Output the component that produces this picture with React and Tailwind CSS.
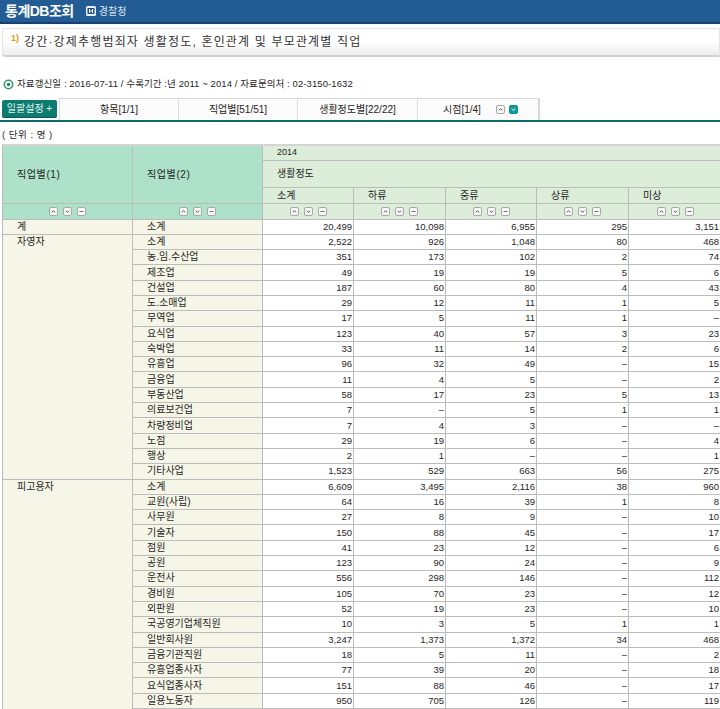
import React from 'react'

const FONT = 'font-["Liberation_Sans","Noto_Sans_CJK_KR",sans-serif]'

const rows = [
  ['계', '소계', '20,499', '10,098', '6,955', '295', '3,151'],
  ['자영자', '소계', '2,522', '926', '1,048', '80', '468'],
  ['', '농.임.수산업', '351', '173', '102', '2', '74'],
  ['', '제조업', '49', '19', '19', '5', '6'],
  ['', '건설업', '187', '60', '80', '4', '43'],
  ['', '도.소매업', '29', '12', '11', '1', '5'],
  ['', '무역업', '17', '5', '11', '1', '–'],
  ['', '요식업', '123', '40', '57', '3', '23'],
  ['', '숙박업', '33', '11', '14', '2', '6'],
  ['', '유흥업', '96', '32', '49', '–', '15'],
  ['', '금융업', '11', '4', '5', '–', '2'],
  ['', '부동산업', '58', '17', '23', '5', '13'],
  ['', '의료보건업', '7', '–', '5', '1', '1'],
  ['', '차량정비업', '7', '4', '3', '–', '–'],
  ['', '노점', '29', '19', '6', '–', '4'],
  ['', '행상', '2', '1', '–', '–', '1'],
  ['', '기타사업', '1,523', '529', '663', '56', '275'],
  ['피고용자', '소계', '6,609', '3,495', '2,116', '38', '960'],
  ['', '교원(사립)', '64', '16', '39', '1', '8'],
  ['', '사무원', '27', '8', '9', '–', '10'],
  ['', '기술자', '150', '88', '45', '–', '17'],
  ['', '점원', '41', '23', '12', '–', '6'],
  ['', '공원', '123', '90', '24', '–', '9'],
  ['', '운전사', '556', '298', '146', '–', '112'],
  ['', '경비원', '105', '70', '23', '–', '12'],
  ['', '외판원', '52', '19', '23', '–', '10'],
  ['', '국공영기업체직원', '10', '3', '5', '1', '1'],
  ['', '일반회사원', '3,247', '1,373', '1,372', '34', '468'],
  ['', '금융기관직원', '18', '5', '11', '–', '2'],
  ['', '유흥업종사자', '77', '39', '20', '–', '18'],
  ['', '요식업종사자', '151', '88', '46', '–', '17'],
  ['', '일용노동자', '950', '705', '126', '–', '119'],
  ['', '', '', '', '', '', ''],
]

const spans = { 0: 1, 1: 16, 17: 16 }

function SortBtn({ type, active }) {
  return (
    <svg width="9" height="9" viewBox="0 0 9 9" className="inline-block">
      <rect x="0.5" y="0.5" width="8" height="8" rx="1.5" fill={active ? '#0f9c9c' : '#f8f8f8'} stroke={active ? '#0f8c8c' : '#a8a8a8'} />
      {type === 'up' && <path d="M2.8 5.4 L4.5 3.6 L6.2 5.4" fill="none" stroke={active ? '#fff' : '#555'} strokeWidth="1" />}
      {type === 'down' && <path d="M2.8 3.6 L4.5 5.4 L6.2 3.6" fill="none" stroke={active ? '#fff' : '#555'} strokeWidth="1" />}
      {type === 'minus' && <path d="M2.5 4.5 H6.5" fill="none" stroke="#777" strokeWidth="1" />}
    </svg>
  )
}

function BtnGroup() {
  return (
    <div className="flex justify-center items-center gap-[5px] h-full">
      <SortBtn type="up" />
      <SortBtn type="down" />
      <SortBtn type="minus" />
    </div>
  )
}

const th = 'border border-[#bcbcbc] text-left font-normal p-0'

export default function App() {
  return (
    <div className={`${FONT} w-[720px] h-[709px] overflow-hidden bg-white text-[#262626] text-[10px]`}>
      <div className="h-[24px] bg-[#235b94] border-b-2 border-[#16406f] flex items-center pl-[5px]">
        <span className="text-white text-[14px] font-bold tracking-[-0.5px] leading-none">통계DB조회</span>
        <svg width="10" height="10" viewBox="0 0 10 10" className="ml-[12px]">
          <rect width="10" height="10" rx="1.5" fill="#e8eef6" />
          <rect x="1.5" y="2" width="7" height="6" fill="#1d4f8c" />
          <path d="M3.5 3 V7 M6.5 3 V7 M3.5 5 H6.5" stroke="#fff" strokeWidth="1" fill="none" />
        </svg>
        <span className="ml-[3px] text-[#dbe6f2] text-[10px]">경찰청</span>
      </div>

      <div className="mt-[4px] ml-[2px] h-[29px] border border-[#e4e4e4] border-b-2 border-b-[#d0d0d0] rounded-l-[3px] bg-gradient-to-b from-white via-white to-[#ececec] flex items-center pl-[8px]">
        <span className="text-[#e89a10] text-[9px] font-bold -mt-[6px]">1)</span>
        <span className="ml-[5px] text-[12px] tracking-[1.17px] text-[#333]">강간·강제추행범죄자 생활정도, 혼인관계 및 부모관계별 직업</span>
      </div>

      <div className="mt-[20px] ml-[3px] h-[14px] flex items-center">
        <svg width="11" height="11" viewBox="0 0 11 11">
          <circle cx="5.5" cy="5.5" r="4.2" fill="none" stroke="#2f9a6a" strokeWidth="1.6" />
          <circle cx="5.5" cy="5.5" r="1.7" fill="#2f7a5a" />
        </svg>
        <span className="ml-[3px] text-[9.5px] tracking-[0.09px] whitespace-nowrap">자료갱신일 : 2016-07-11 / 수록기간 :년 2011 ~ 2014 / 자료문의처 : 02-3150-1632</span>
      </div>

      <div className="mt-[7px] h-[24px] border-b-2 border-[#0b6f68] flex items-end pl-[2px]">
        <button className="w-[55px] h-[18px] mb-[2px] rounded-[2px] bg-[#0d7c70] border-b border-[#085a52] text-[#e6f3f0] text-[10px] flex items-center justify-center">일괄설정 +</button>
        <div className="ml-[2px] flex h-[22px] border-t border-r-2 border-[#d8d8d8] bg-[#fbfbfb]">
          <div className="w-[120px] border-x border-[#dcdcdc] flex items-center justify-center">항목[1/1]</div>
          <div className="w-[119px] border-r border-[#dcdcdc] flex items-center justify-center">직업별[51/51]</div>
          <div className="w-[120px] border-r border-[#dcdcdc] flex items-center justify-center">생활정도별[22/22]</div>
          <div className="w-[120px] flex items-center pl-[25px]">
            시점[1/4]
            <span className="ml-[15px] flex gap-[4px]"><SortBtn type="up" /><SortBtn type="down" active /></span>
          </div>
        </div>
      </div>

      <div className="mt-[7px] ml-[2px] h-[12px] leading-[12px] text-[9.5px] tracking-[0.5px]">( 단위 : 명 )</div>

      <table className="mt-[3px] ml-[2px] w-[720px] table-fixed border-collapse border-t-2 border-[#d4d4d4]">
        <colgroup>
          <col className="w-[130px]" />
          <col className="w-[130px]" />
          <col className="w-[91px]" />
          <col className="w-[92px]" />
          <col className="w-[91px]" />
          <col className="w-[92px]" />
          <col className="w-[94px]" />
        </colgroup>
        <thead>
          <tr className="h-[15px]">
            <th rowSpan={3} className={`${th} bg-[#aee1ca] pl-[14px] font-bold tracking-[0.6px] text-[#222]`}>직업별(1)</th>
            <th rowSpan={3} className={`${th} bg-[#aee1ca] pl-[14px] font-bold tracking-[0.6px] text-[#222]`}>직업별(2)</th>
            <th colSpan={5} className={`${th} bg-[#dcedd9] pl-[14px] text-[9px]`}>2014</th>
          </tr>
          <tr className="h-[27px]">
            <th colSpan={5} className={`${th} bg-[#dcedd9] pl-[14px]`}>생활정도</th>
          </tr>
          <tr className="h-[15px]">
            {['소계', '하류', '중류', '상류', '미상'].map(h => (
              <th key={h} className={`${th} bg-[#dcedd9] pl-[14px]`}>{h}</th>
            ))}
          </tr>
          <tr className="h-[16px]">
            {[0, 1].map(i => (
              <th key={i} className={`${th} bg-[#aee1ca]`}><BtnGroup /></th>
            ))}
            {[0, 1, 2, 3, 4].map(i => (
              <th key={i} className={`${th} bg-[#dcedd9]`}><BtnGroup /></th>
            ))}
          </tr>
        </thead>
        <tbody>
          {rows.map((r, i) => (
            <tr key={i} className="h-[15.3px]">
              {spans[i] && (
                <td rowSpan={spans[i]} className="border border-[#bcbcbc] bg-[#f6f6e8] pl-[14px] align-top p-0 leading-[14px]">{r[0]}</td>
              )}
              <td className="border border-[#bcbcbc] bg-[#f6f6e8] pl-[14px] p-0 leading-[14px]">{r[1]}</td>
              {r.slice(2).map((v, j) => (
                <td key={j} className={`border border-[#bcbcbc] text-right p-0 leading-[14px] text-[9.5px] ${j === 4 ? 'pr-[3px]' : 'pr-[1px]'}`}>{v}</td>
              ))}
            </tr>
          ))}
        </tbody>
      </table>
    </div>
  )
}
